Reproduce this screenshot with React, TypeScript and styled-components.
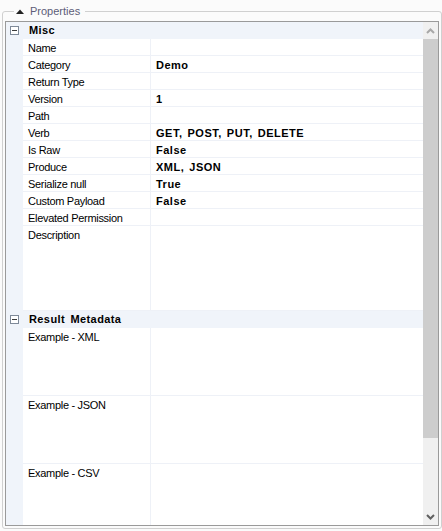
import React from "react";
import styled, { createGlobalStyle } from "styled-components";

const Global = createGlobalStyle`
  html, body { margin: 0; padding: 0; background: #fbfbfb; }
  * { box-sizing: border-box; }
`;

const Page = styled.div`
  width: 442px;
  height: 531px;
  padding: 11px 0 2px 2px;
  background: #fbfbfb;
  font-family: "Liberation Sans", Arial, sans-serif;
  font-size: 11px;
  color: #000;
`;

const Frame = styled.div`
  height: 518px;
  border: 1px solid #d0d0d0;
  border-radius: 3px;
  padding: 9px 2px 2px 2px;
  display: flex;
  flex-direction: column;
`;

const Caption = styled.div`
  height: 14px;
  margin: -17px 0 3px 9px;
  padding: 0 5px 0 2px;
  align-self: flex-start;
  display: flex;
  align-items: center;
  gap: 6px;
  background: #fbfbfb;
  color: #5d5d78;
  line-height: 14px;
`;

const Grid = styled.div`
  flex: 1;
  min-height: 0;
  border: 1px solid #9a9a9a;
  display: flex;
  overflow: hidden;
  background: #fff;
`;

const Rows = styled.div`
  flex: 1;
  display: flex;
  flex-direction: column;
  overflow: hidden;
`;

const Row = styled.div<{ $h: number }>`
  display: flex;
  flex: 0 0 ${(p) => p.$h}px;
  height: ${(p) => p.$h}px;
`;

const Gutter = styled.div`
  width: 17px;
  flex: 0 0 17px;
  background: #f0f4fa;
  display: flex;
  justify-content: center;
  padding-top: 4px;
`;

const Toggle = styled.div`
  width: 9px;
  height: 9px;
  border: 1px solid #7f8a99;
  background: #fff;
  position: relative;
  margin-left: -1px;
  &::after {
    content: "";
    position: absolute;
    left: 1px;
    top: 3px;
    width: 5px;
    height: 1px;
    background: #3c3c3c;
  }
`;

const HeaderCell = styled.div`
  flex: 1;
  background: #f0f4fa;
  font-weight: bold;
  letter-spacing: 0.4px;
  word-spacing: 2px;
  padding: 1px 0 0 6px;
  line-height: 15px;
`;

const Label = styled.div`
  width: 128px;
  flex: 0 0 128px;
  border-right: 1px solid #eef1f7;
  border-bottom: 1px solid #eef1f7;
  padding: 2px 0 0 5px;
  line-height: 14px;
  letter-spacing: -0.3px;
  white-space: nowrap;
`;

const Value = styled.div`
  flex: 1;
  border-bottom: 1px solid #eef1f7;
  padding: 2px 0 0 5px;
  line-height: 14px;
  font-weight: bold;
  letter-spacing: 0.5px;
  word-spacing: 1.5px;
  white-space: nowrap;
`;

const Scrollbar = styled.div`
  width: 15px;
  flex: 0 0 15px;
  background: #f0f0f0;
  display: flex;
  flex-direction: column;
`;

const Arrow = styled.div`
  height: 17px;
  flex: 0 0 17px;
  display: flex;
  align-items: center;
  justify-content: center;
`;

const Thumb = styled.div`
  height: 399px;
  flex: 0 0 399px;
  background: #cdcdcd;
`;

const Track = styled.div`
  flex: 1;
`;

const Chevron = ({ up, color }: { up?: boolean; color: string }) => (
  <svg width="9" height="6" viewBox="0 0 9 6">
    <path
      d={up ? "M1 5 L4.5 1.5 L8 5" : "M1 1 L4.5 4.5 L8 1"}
      fill="none"
      stroke={color}
      strokeWidth="2"
    />
  </svg>
);

type Item = { label: string; value?: string; h?: number };
type Section = { title: string; items: Item[] };

const sections: Section[] = [
  {
    title: "Misc",
    items: [
      { label: "Name" },
      { label: "Category", value: "Demo" },
      { label: "Return Type" },
      { label: "Version", value: "1" },
      { label: "Path" },
      { label: "Verb", value: "GET, POST, PUT, DELETE" },
      { label: "Is Raw", value: "False" },
      { label: "Produce", value: "XML, JSON" },
      { label: "Serialize null", value: "True" },
      { label: "Custom Payload", value: "False" },
      { label: "Elevated Permission" },
      { label: "Description", h: 85 },
    ],
  },
  {
    title: "Result Metadata",
    items: [
      { label: "Example - XML", h: 68 },
      { label: "Example - JSON", h: 68 },
      { label: "Example - CSV", h: 68 },
    ],
  },
];

export default function App() {
  return (
    <>
      <Global />
      <Page>
        <Frame>
          <Caption>
            <svg width="8" height="5" viewBox="0 0 8 5">
              <path d="M0 5 L4 0.5 L8 5 Z" fill="#222" />
            </svg>
            <span>Properties</span>
          </Caption>
          <Grid>
            <Rows>
              {sections.map((s) => (
                <React.Fragment key={s.title}>
                  <Row $h={17}>
                    <Gutter>
                      <Toggle />
                    </Gutter>
                    <HeaderCell>{s.title}</HeaderCell>
                  </Row>
                  {s.items.map((it) => (
                    <Row $h={it.h ?? 17} key={it.label}>
                      <Gutter />
                      <Label>{it.label}</Label>
                      <Value>{it.value ?? ""}</Value>
                    </Row>
                  ))}
                </React.Fragment>
              ))}
            </Rows>
            <Scrollbar>
              <Arrow>
                <Chevron up color="#a8a8a8" />
              </Arrow>
              <Thumb />
              <Track />
              <Arrow>
                <Chevron color="#606060" />
              </Arrow>
            </Scrollbar>
          </Grid>
        </Frame>
      </Page>
    </>
  );
}
